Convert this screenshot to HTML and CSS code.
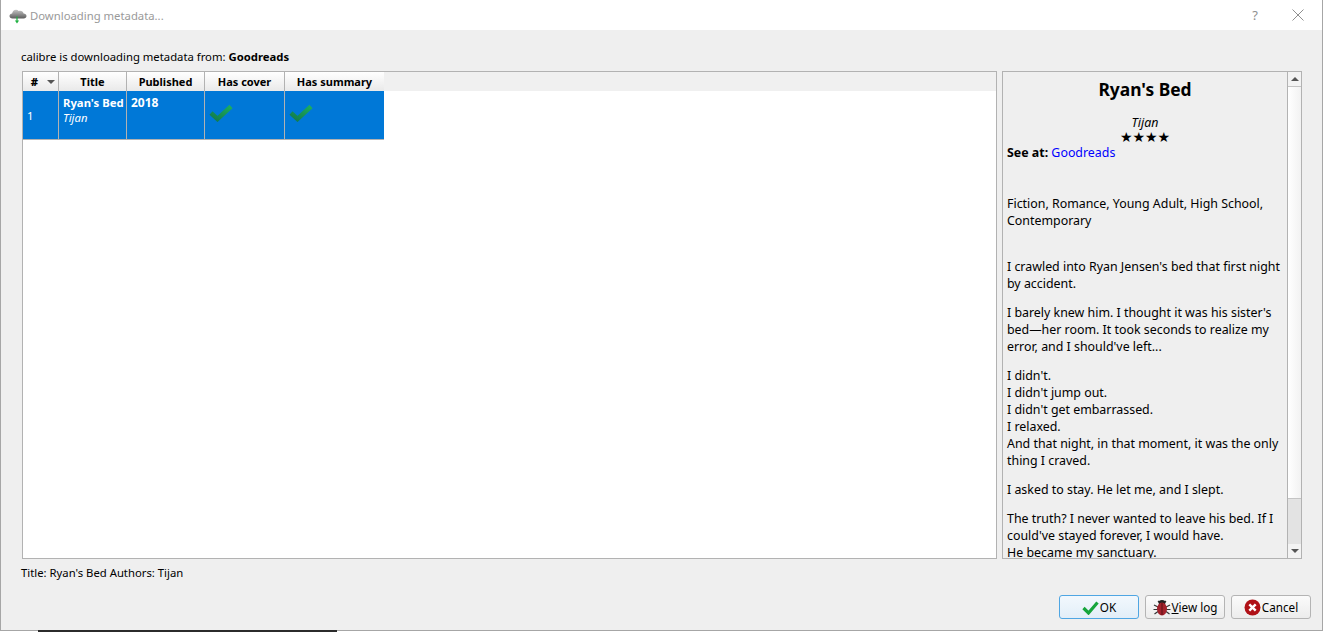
FILE: index.html
```html
<!DOCTYPE html>
<html lang="en">
<head>
<meta charset="UTF-8">
<title>Downloading metadata...</title>
<link rel="stylesheet" href="styles.css">
</head>
<body>
<div class="dialog">
    <div class="titlebar">
        <svg class="cloud" width="18" height="18" viewBox="0 0 18 18">
            <defs>
                <linearGradient id="cloud-fill" x1="0" y1="0" x2="0" y2="1">
                    <stop offset="0" stop-color="#c4c4c4"/>
                    <stop offset="1" stop-color="#5c5c5c"/>
                </linearGradient>
            </defs>
            <path d="M3.500 12.500C1.600 12.500.5 11.300.5 10c0-1.500 1.200-2.500 2.600-2.500C3.500 5.200 5 3.800 7 3.800c1.100 0 2 .4 2.700 1.100 2.300-.8 4.600.5 4.900 2.700 1.600.1 2.900 1.100 2.900 2.500 0 1.400-1.200 2.400-2.800 2.400z" fill="url(#cloud-fill)"/>
            <path d="M7.400 10.500h1.200v4h1.500L8 17.500l-2.100-3h1.500z" fill="#1fb141"/>
        </svg>
        <span class="title-text">Downloading metadata...</span>
        <span class="help">?</span>
        <svg class="close" width="12" height="12" viewBox="0 0 12 12">
            <path d="M.5.500l11 11M11.500.5l-11 11" stroke="#8f8f8f" stroke-width="1" fill="none"/>
        </svg>
    </div>

    <div class="content">
        <div class="message">calibre is downloading metadata from: <b>Goodreads</b></div>

        <div class="main-row">
            <div class="results">
                <div class="table-row head-row">
                    <div class="head-cell num-head"><b>#</b><span class="sort-arrow"></span></div>
                    <div class="head-cell">Title</div>
                    <div class="head-cell">Published</div>
                    <div class="head-cell">Has cover</div>
                    <div class="head-cell last-head">Has summary</div>
                </div>
                <div class="table-row body-row">
                    <div class="cell num-cell">1</div>
                    <div class="cell"><b>Ryan's Bed</b><i>Tijan</i></div>
                    <div class="cell"><b class="year">2018</b></div>
                    <div class="cell check-cell">
                        <svg width="24" height="18" viewBox="0 0 24 18"><path class="tick" d="M2 9l6.500 6L22 2.500" fill="none" stroke="url(#tick-a)" stroke-width="4.500"/><defs><linearGradient id="tick-a" x1="0" y1="1" x2="1" y2="0"><stop offset="0" stop-color="#127a4c"/><stop offset="1" stop-color="#1cae5e"/></linearGradient></defs></svg>
                    </div>
                    <div class="cell check-cell">
                        <svg width="24" height="18" viewBox="0 0 24 18"><path class="tick" d="M2 9l6.500 6L22 2.500" fill="none" stroke="url(#tick-a)" stroke-width="4.500"/></svg>
                    </div>
                </div>
            </div>

            <div class="details">
                <div class="details-text">
                    <h2>Ryan's Bed</h2>
                    <div class="author">Tijan</div>
                    <div class="stars">★★★★</div>
                    <div><b>See at:</b> <a href="#">Goodreads</a></div>
                    <p class="tags">Fiction, Romance, Young Adult, High School, Contemporary</p>
                    <p class="first">I crawled into Ryan Jensen's bed that first night by accident.</p>
                    <p>I barely knew him. I thought it was his sister's bed—her room. It took seconds to realize my error, and I should've left...</p>
                    <p>I didn't.<br>I didn't jump out.<br>I didn't get embarrassed.<br>I relaxed.<br>And that night, in that moment, it was the only thing I craved.</p>
                    <p>I asked to stay. He let me, and I slept.</p>
                    <p>The truth? I never wanted to leave his bed. If I could've stayed forever, I would have.<br>He became my sanctuary.</p>
                </div>
                <div class="scrollbar">
                    <div class="scroll-btn"><span class="arrow-up"></span></div>
                    <div class="scroll-handle"></div>
                    <div class="scroll-track"></div>
                    <div class="scroll-btn"><span class="arrow-down"></span></div>
                </div>
            </div>
        </div>

        <div class="status">Title: Ryan's Bed Authors: Tijan</div>

        <div class="buttons">
            <div class="btn btn-default">
                <svg width="17" height="15" viewBox="0 0 17 15"><path d="M1.500 8l5 5L15.500 2.500" fill="none" stroke="#16a53c" stroke-width="3.200"/></svg>
                <span>OK</span>
            </div>
            <div class="btn">
                <svg width="18" height="18" viewBox="0 0 18 18">
                    <path d="M5 3l2.500 2.500M13 3l-2.500 2.500M1 7l4 2M17 7l-4 2M.5 11.500H5M17.500 11.500H13M1.500 16l3.500-2.500M16.500 16L13 13.500" stroke="#333" stroke-width="1.200" fill="none"/>
                    <ellipse cx="9" cy="4.500" rx="3.500" ry="2.500" fill="#222"/>
                    <ellipse cx="9" cy="11" rx="5" ry="6.500" fill="#a3222c"/>
                    <path d="M9 5v12" stroke="#5b1015" stroke-width="1"/>
                </svg>
                <span><u>V</u>iew log</span>
            </div>
            <div class="btn">
                <svg width="17" height="17" viewBox="0 0 17 17">
                    <circle cx="8.500" cy="8.500" r="8" fill="#b01117"/>
                    <path d="M5.300 5.300l6.400 6.400M11.700 5.300l-6.400 6.400" stroke="#fff" stroke-width="2.400"/>
                </svg>
                <span>Cancel</span>
            </div>
        </div>
    </div>
</div>
<div class="behind"><div class="behind-dark"></div></div>
</body>
</html>
```

FILE: styles.css
```css
* {
    margin: 0;
    padding: 0;
    box-sizing: border-box;
}
html, body {
    height: 632px;
    overflow: hidden;
}
body {
    font-family: "Noto Sans", "Open Sans", sans-serif;
    font-size: 11.3px;
    line-height: 17px;
    color: #000;
    background: #fff;
}
.dialog {
    height: 630px;
    display: flex;
    flex-direction: column;
    border-left: 1px solid #a6a6a6;
    border-right: 1px solid #a6a6a6;
}
.titlebar {
    height: 30px;
    flex: none;
    display: flex;
    align-items: center;
    padding-left: 8px;
    background: #fff;
}
.title-text {
    margin-left: 3px;
    color: #9a9a9a;
}
.help {
    margin-left: auto;
    color: #8f8f8f;
    font-size: 13px;
}
.close {
    margin-left: 34px;
    margin-right: 18px;
}
.content {
    flex: 1;
    display: flex;
    flex-direction: column;
    padding: 18px 11px 11px 20px;
    background: #efefef;
}
.message {
    margin-bottom: 6px;
}
.main-row {
    height: 488px;
    display: flex;
    gap: 5px;
    padding-right: 9px;
}
.results {
    width: 975px;
    border: 1px solid #b2b2b2;
    background: #fff;
    margin-left: 1px;
}
.table-row {
    display: grid;
    grid-template-columns: 36px 68px 78px 80px 99px;
}
.head-row {
    height: 19px;
    background: #f0f0f0;
    grid-template-columns: 36px 68px 78px 80px 99px 1fr;
}
.head-cell {
    text-align: center;
    font-weight: bold;
    font-size: 11px;
    border-right: 1px solid #b2b2b2;
    background: linear-gradient(#ffffff, #e9e9e9);
    line-height: 19px;
}
.head-cell.last-head {
    border-right: none;
}
.num-head {
    display: flex;
    align-items: center;
    justify-content: flex-end;
    gap: 9px;
    padding-right: 3px;
}
.sort-arrow {
    width: 0;
    height: 0;
    border-left: 4px solid transparent;
    border-right: 4px solid transparent;
    border-top: 4px solid #555;
}
.body-row {
    height: 49px;
    background: #0078d7;
    color: #fff;
    border-bottom: 1px solid #b2b2b2;
    width: 361px;
    overflow: hidden;
}
.cell {
    border-right: 1px solid #b2b2b2;
    padding: 4px 4px 0;
    white-space: nowrap;
}
.cell:last-child {
    border-right: none;
}
.cell b, .cell i {
    display: block;
    line-height: 15px;
}
.cell .year {
    font-size: 12px;
}
.num-cell {
    padding-top: 16px;
}
.check-cell {
    padding: 13px 0 0 4px;
}
.details {
    width: 300px;
    display: flex;
    border: 1px solid #b2b2b2;
    background: #efefef;
    overflow: hidden;
}
.details-text {
    flex: 1;
    min-width: 0;
    padding: 6px 4px 0;
    overflow: hidden;
    font-size: 12.4px;
}
.details-text h2 {
    font-size: 17.4px;
    line-height: 22px;
    text-align: center;
    margin-bottom: 16px;
}
.author {
    text-align: center;
    font-style: italic;
    line-height: 14px;
}
.stars {
    text-align: center;
    font-family: "DejaVu Sans", sans-serif;
    font-size: 14px;
    line-height: 14px;
}
.details-text a {
    color: #0000ff;
    text-decoration: none;
}
.details-text p {
    margin-top: 12px;
}
.details-text .tags {
    margin-top: 34px;
}
.details-text .first {
    margin-top: 29px;
}
.scrollbar {
    width: 14px;
    flex: none;
    display: flex;
    flex-direction: column;
    border-left: 1px solid #b2b2b2;
}
.scroll-btn {
    height: 14px;
    flex: none;
    display: flex;
    align-items: center;
    justify-content: center;
    background: #f3f3f3;
}
.scroll-handle {
    height: 413px;
    flex: none;
    background: linear-gradient(90deg, #ffffff, #f2f2f2);
    border-top: 1px solid #c4c4c4;
    border-bottom: 1px solid #c4c4c4;
}
.scroll-track {
    flex: 1;
    background: #e3e3e3;
}
.arrow-up {
    border-left: 4px solid transparent;
    border-right: 4px solid transparent;
    border-bottom: 4px solid #555;
}
.arrow-down {
    border-left: 4px solid transparent;
    border-right: 4px solid transparent;
    border-top: 4px solid #555;
}
.status {
    margin-top: 5px;
}
.buttons {
    margin-top: auto;
    display: flex;
    justify-content: flex-end;
    gap: 6px;
}
.btn {
    width: 80px;
    height: 24px;
    display: flex;
    align-items: center;
    justify-content: center;
    gap: 1px;
    border: 1px solid #b4b4b4;
    border-radius: 3px;
    background: linear-gradient(#fbfbfb, #ececec);
    font-size: 11.7px;
}
.btn-default {
    border-color: #4fa6e3;
    background: linear-gradient(#f2f8fd, #e2eef8);
}
.behind {
    height: 2px;
    padding-left: 38px;
    background: linear-gradient(#a6a6a6 1px, #fff 1px);
}
.behind-dark {
    width: 299px;
    height: 2px;
    background: #2b2b2b;
}
```
